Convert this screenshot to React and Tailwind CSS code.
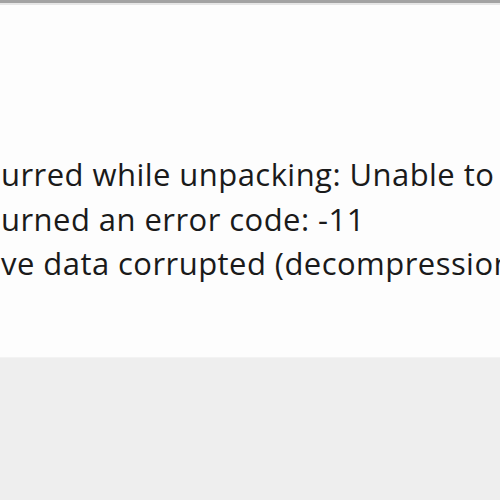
export default function App() {
  const lines = [
    'urred while unpacking: Unable to read data',
    'urned an error code: -11',
    've data corrupted (decompression fails)',
  ]
  return (
    <div className="w-[500px] h-[500px] overflow-hidden flex flex-col bg-[#fdfdfd]">
      <div className="h-[3px] bg-[#a3a3a3] shrink-0" />
      <div className="h-[2px] bg-[#e6e6e6] shrink-0" />
      <div className="flex-1 pt-[147px] pl-[1px] overflow-hidden" style={{ fontFamily: '"Open Sans", sans-serif' }}>
        {lines.map((t) => (
          <div key={t} className="whitespace-nowrap text-[31px] tracking-[0.45px] leading-[44.5px] text-[#1a1a1a]">
            {t}
          </div>
        ))}
      </div>
      <div className="h-[143px] shrink-0 bg-[#eeeeee] border-t border-[#f3f3f3]" />
    </div>
  )
}
